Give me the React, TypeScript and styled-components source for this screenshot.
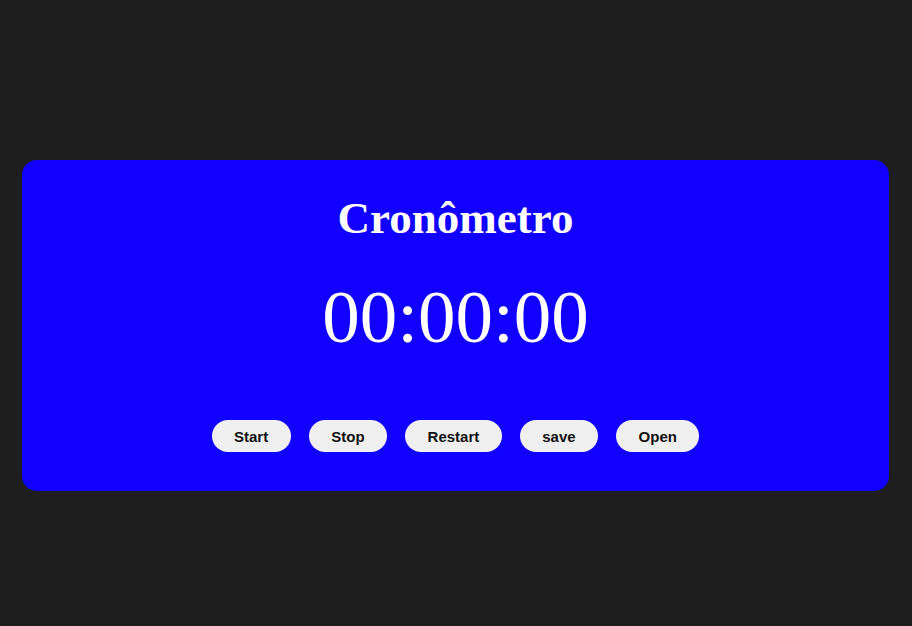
import React from "react";
import styled, { createGlobalStyle } from "styled-components";

const Global = createGlobalStyle`
  html, body { margin: 0; padding: 0; background: #1e1e1e; }
  body { font-family: "Liberation Serif", "Times New Roman", serif; }
`;

const Page = styled.div`
  min-height: 626px;
  padding: 160px 23px 0 22px;
  box-sizing: border-box;
`;

const Card = styled.main`
  background: #1100ff;
  border-radius: 15px;
  padding: 33px 0 39px;
  box-sizing: border-box;
  display: flex;
  flex-direction: column;
  align-items: center;
  color: #ffffff;
`;

const Title = styled.h1`
  margin: 0;
  font-family: "Liberation Serif", "Times New Roman", serif;
  font-size: 45px;
  font-weight: bold;
  line-height: 50px;
`;

const Timer = styled.div`
  margin-top: 31px;
  font-family: "Liberation Serif", "Times New Roman", serif;
  font-size: 75px;
  line-height: 86px;
`;

const Controls = styled.div`
  margin-top: 60px;
  display: flex;
  gap: 18px;
  justify-content: center;
`;

const Button = styled.button`
  height: 32px;
  padding: 0 22.5px;
  border: none;
  border-radius: 16px;
  background: #efefef;
  color: #111111;
  font-family: "Liberation Sans", Arial, sans-serif;
  font-weight: bold;
  font-size: 15px;
  cursor: pointer;
`;

export default function App() {
  return (
    <Page>
      <Global />
      <Card>
        <Title>Cronômetro</Title>
        <Timer>00:00:00</Timer>
        <Controls>
          <Button>Start</Button>
          <Button>Stop</Button>
          <Button>Restart</Button>
          <Button>save</Button>
          <Button>Open</Button>
        </Controls>
      </Card>
    </Page>
  );
}
